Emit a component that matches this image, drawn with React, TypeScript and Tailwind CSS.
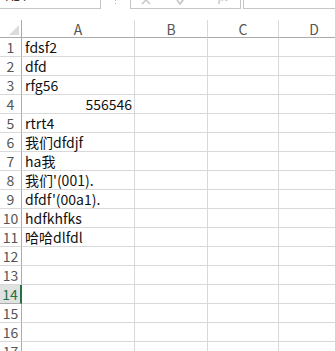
import React from "react";

const rows: { a?: string; num?: boolean }[] = [
  { a: "fdsf2" },
  { a: "dfd" },
  { a: "rfg56" },
  { a: "556546", num: true },
  { a: "rtrt4" },
  { a: "我们dfdjf" },
  { a: "ha我" },
  { a: "我们'(001)." },
  { a: "dfdf'(00a1)." },
  { a: "hdfkhfks" },
  { a: "哈哈dlfdl" },
  {},
  {},
  {},
  {},
  {},
  {},
];

const font = { fontFamily: '"Noto Sans CJK SC", "Noto Sans", sans-serif' };

export default function App() {
  const selected = 14;

  return (
    <div className="w-[335px] h-[351px] overflow-hidden bg-white text-[14px]" style={font}>
      {/* formula bar, mostly scrolled off the top */}
      <div className="h-[20px] flex items-start">
        <div className="w-[101px] h-[9px] border-r border-b border-[#c6c6c6] overflow-hidden">
          <div className="mt-[-10px] ml-[6px] text-[12px] leading-[12px] text-[#333]">A14</div>
        </div>
        <div className="w-[29px] h-[9px] flex justify-center">
          <svg width="3" height="5" viewBox="0 0 3 5">
            <rect x="1" y="0" width="1" height="1" fill="#b0b0b0" />
            <rect x="1" y="3" width="1" height="1" fill="#b0b0b0" />
          </svg>
        </div>
        <div className="w-[111px] h-[9px] border-l border-r border-b border-[#c6c6c6] overflow-hidden flex items-start">
          <div className="w-[30px] flex justify-center">
            <svg width="10" height="5" viewBox="0 5 10 5">
              <path d="M1 1 L9 9 M9 1 L1 9" stroke="#c8c8c8" strokeWidth="1.6" fill="none" />
            </svg>
          </div>
          <div className="w-[40px] flex justify-center">
            <svg width="11" height="5" viewBox="0 5 11 5">
              <path d="M1 5 L4 9 L10 1" stroke="#c8c8c8" strokeWidth="1.8" fill="none" />
            </svg>
          </div>
          <div className="flex-1 flex justify-end pr-[12px] mt-[-10px] text-[14px] leading-[14px] italic text-[#bdbdbd]" style={{ fontFamily: '"Liberation Serif", serif' }}>
            fx
          </div>
        </div>
        <div className="ml-[2px] flex-1 h-[9px] border-l border-b border-[#c6c6c6]" />
      </div>

      {/* grid */}
      <div className="grid grid-cols-[22px_113px_73px_71px_71px]">
        {/* header row */}
        <div className="h-[18px] border-r border-b border-[#ababab] flex items-end justify-end pr-[2px] pb-[2px]">
          <svg width="10" height="10" viewBox="0 0 10 10">
            <polygon points="10,0 10,10 0,10" fill="#dcdcdc" />
          </svg>
        </div>
        {["A", "B", "C", "D"].map((c) => (
          <div
            key={c}
            className="h-[18px] border-r border-b border-r-[#d9d9d9] border-b-[#ababab] flex items-center justify-center text-[#555] leading-none"
          >
            {c}
          </div>
        ))}

        {rows.map((r, i) => {
          const n = i + 1;
          const sel = n === selected;
          return (
            <React.Fragment key={n}>
              <div
                className={
                  sel
                    ? "h-[19px] border-b border-b-[#ababab] border-r-2 border-r-[#217346] bg-[#e1e1e1] text-[#217346] flex items-center justify-center leading-none"
                    : "h-[19px] border-b border-r border-b-[#d9d9d9] border-r-[#ababab] text-[#555] flex items-center justify-center leading-none"
                }
              >
                {n}
              </div>
              <div
                className={
                  "h-[19px] border-r border-b border-[#d9d9d9] flex items-center leading-none text-[#111] whitespace-nowrap " +
                  (r.num ? "justify-end pr-[2px]" : "pl-[3px]")
                }
              >
                {r.a}
              </div>
              <div className="h-[19px] border-r border-b border-[#d9d9d9]" />
              <div className="h-[19px] border-r border-b border-[#d9d9d9]" />
              <div className="h-[19px] border-r border-b border-[#d9d9d9]" />
            </React.Fragment>
          );
        })}
      </div>
    </div>
  );
}
